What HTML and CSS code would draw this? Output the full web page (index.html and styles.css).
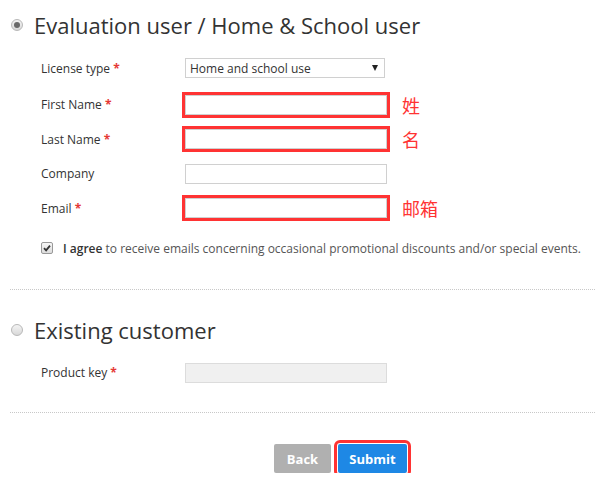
FILE: index.html
```html
<!DOCTYPE html>
<html>
<head>
<meta charset="utf-8">
<link rel="stylesheet" href="styles.css">
</head>
<body>
<div class="page">
  <section class="block">
    <h2 class="title"><span class="radio radio-on"></span>Evaluation user / Home &amp; School user</h2>
    <div class="form">
      <div class="row row-first">
        <label class="lbl">License type <span class="req">*</span></label>
        <div class="select"><span>Home and school use</span><span class="arrow"></span></div>
      </div>
      <div class="row">
        <label class="lbl">First Name <span class="req">*</span></label>
        <div class="input marked"></div>
        <span class="note">姓</span>
      </div>
      <div class="row">
        <label class="lbl">Last Name <span class="req">*</span></label>
        <div class="input marked"></div>
        <span class="note">名</span>
      </div>
      <div class="row">
        <label class="lbl">Company</label>
        <div class="input"></div>
      </div>
      <div class="row">
        <label class="lbl">Email <span class="req">*</span></label>
        <div class="input marked"></div>
        <span class="note">邮箱</span>
      </div>
      <div class="agree">
        <span class="check"><svg width="8" height="8" viewBox="0 0 8 8"><path d="M1 4.2 L3.1 6.3 L7 1.6" fill="none" stroke="#333" stroke-width="1.8"/></svg></span>
        <span class="agree-text"><b>I agree</b> to receive emails concerning occasional promotional discounts and/or special events.</span>
      </div>
    </div>
  </section>
  <hr class="sep">
  <section class="block block2">
    <h2 class="title"><span class="radio"></span>Existing customer</h2>
    <div class="form">
      <div class="row row-key">
        <label class="lbl">Product key <span class="req">*</span></label>
        <div class="input disabled"></div>
      </div>
    </div>
  </section>
  <hr class="sep sep2">
  <div class="actions">
    <button class="btn btn-back">Back</button>
    <button class="btn btn-submit">Submit</button>
  </div>
</div>
</body>
</html>
```

FILE: styles.css
```css
html, body {
  margin: 0;
  padding: 0;
  background: #fff;
}
body {
  font-family: "Open Sans", "Noto Sans CJK SC", sans-serif;
  color: #333;
}
.page {
  margin-left: 10px;
  padding-top: 9px;
}
.title {
  display: flex;
  align-items: center;
  margin: 0;
  font-size: 22px;
  font-weight: 400;
  line-height: 32px;
  color: #333;
}
.radio {
  width: 12px;
  height: 12px;
  border-radius: 50%;
  box-sizing: border-box;
  border: 1px solid #b8b8b8;
  background: linear-gradient(#f4f4f4, #d8d8d8);
  margin-left: 1px;
  margin-right: 11px;
  position: relative;
}
.radio-on::after {
  content: "";
  position: absolute;
  left: 2px;
  top: 2px;
  width: 6px;
  height: 6px;
  border-radius: 50%;
  background: #6a6a6a;
}
.form {
  padding-left: 31px;
}
.row {
  display: flex;
  align-items: center;
  height: 34.5px;
}
.row-first {
  margin-top: 10px;
  margin-bottom: 2px;
}
.lbl {
  width: 144px;
  font-size: 12px;
  color: #333;
}
.req {
  color: #e53935;
  font-weight: 700;
}
.select {
  width: 200px;
  height: 20px;
  box-sizing: border-box;
  border: 1px solid #d0d0d0;
  display: flex;
  align-items: center;
  justify-content: space-between;
  padding: 0 6px 0 4px;
  font-size: 12px;
  color: #333;
}
.arrow {
  width: 0;
  height: 0;
  border-left: 3.5px solid transparent;
  border-right: 3.5px solid transparent;
  border-top: 6px solid #222;
}
.input {
  width: 202px;
  height: 20px;
  box-sizing: border-box;
  border: 1px solid #d0d0d0;
  background: #fff;
}
.input.marked {
  outline: 3px solid #ff3333;
  outline-offset: 0;
}
.input.disabled {
  background: #f0f0f0;
  border-color: #dcdcdc;
}
.note {
  margin-left: 15px;
  font-family: "Noto Sans CJK SC", sans-serif;
  font-size: 18px;
  color: #ff3333;
}
.agree {
  display: flex;
  align-items: center;
  margin-top: 14px;
  font-size: 12px;
  color: #555;
}
.check {
  width: 12px;
  height: 12px;
  box-sizing: border-box;
  border: 1px solid #999;
  border-radius: 2px;
  background: linear-gradient(#f6f6f6, #dcdcdc);
  display: flex;
  align-items: center;
  justify-content: center;
  margin-right: 10px;
}
.agree-text b {
  font-weight: 600;
  color: #333;
}
.sep {
  border: 0;
  border-top: 1px dotted #c8c8c8;
  margin: 32px 0 0 0;
}
.block2 {
  padding-top: 24px;
}
.row-key {
  margin-top: 10px;
}
.sep2 {
  margin-top: 22px;
}
.actions {
  display: flex;
  gap: 7px;
  padding-left: 264px;
  margin-top: 31px;
}
.btn {
  height: 29px;
  border: 0;
  border-radius: 2px;
  color: #fff;
  font-family: "Open Sans", sans-serif;
  font-size: 13px;
  font-weight: 700;
  padding: 0;
}
.btn-back {
  width: 57px;
  background: #b0b0b0;
}
.btn-submit {
  width: 69px;
  background: #1e88e5;
  outline: 3px solid #ff3333;
  outline-offset: 1px;
}
```
